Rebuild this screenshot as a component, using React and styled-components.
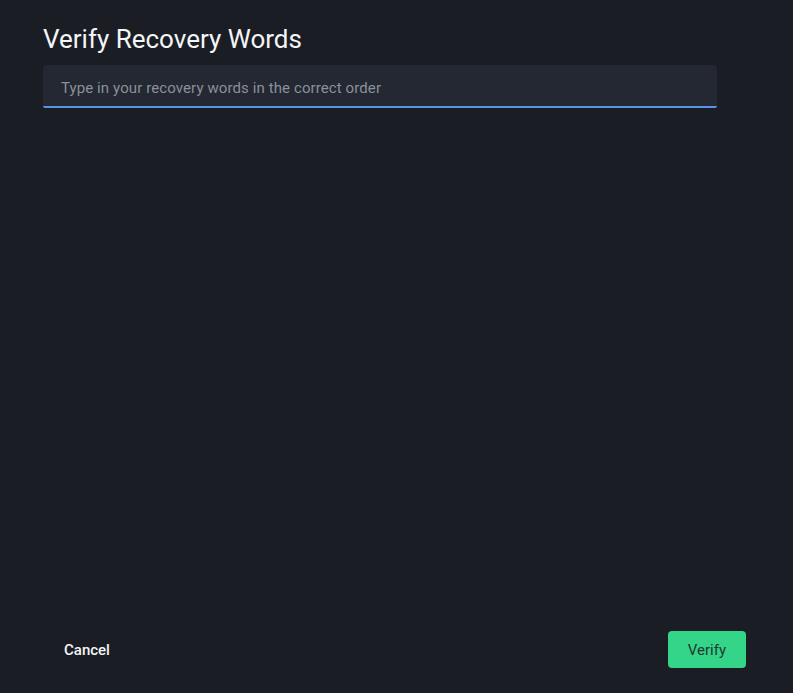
import React from 'react';
import styled, { createGlobalStyle } from 'styled-components';

const GlobalStyle = createGlobalStyle`
  html, body {
    margin: 0;
    padding: 0;
    background: #1a1d24;
  }
  body {
    font-family: Roboto, "Noto Sans", sans-serif;
  }
`;

const Page = styled.div`
  display: flex;
  flex-direction: column;
  height: 693px;
  box-sizing: border-box;
  padding: 23px 47px 25px 43px;
`;

const Title = styled.h1`
  margin: 0;
  font-size: 26px;
  line-height: 32px;
  font-weight: 400;
  color: #f4f5f7;
`;

const Field = styled.div`
  margin-top: 10px;
  width: 674px;
  height: 43px;
  box-sizing: border-box;
  background: #232833;
  border-radius: 4px 4px 2px 2px;
  border-bottom: 2px solid #5b93e6;
  display: flex;
  align-items: center;
  padding: 0 18px;
`;

const Input = styled.input`
  flex: 1;
  background: transparent;
  border: 0;
  outline: none;
  color: #e4e6ea;
  font-family: inherit;
  font-size: 15px;
  letter-spacing: 0.1px;
  padding: 0;
  margin-top: 4px;
  caret-color: #e4e6ea;
  &::placeholder {
    color: #8b9099;
  }
`;

const Spacer = styled.div`
  flex: 1;
`;

const Footer = styled.div`
  display: flex;
  justify-content: space-between;
  align-items: center;
`;

const Button = styled.button`
  font-family: inherit;
  font-size: 15px;
  height: 37px;
  border-radius: 4px;
  border: 0;
  cursor: pointer;
  padding: 0 ${(p) => (p.primary ? '20px' : '21px')};
  background: ${(p) => (p.primary ? '#34d489' : 'transparent')};
  color: ${(p) => (p.primary ? '#1b3b2c' : '#f4f5f7')};
  font-weight: ${(p) => (p.primary ? 400 : 500)};
`;

export default function App() {
  return (
    <>
      <GlobalStyle />
      <Page>
        <Title>Verify Recovery Words</Title>
        <Field>
          <Input autoFocus placeholder="Type in your recovery words in the correct order" />
        </Field>
        <Spacer />
        <Footer>
          <Button>Cancel</Button>
          <Button primary>Verify</Button>
        </Footer>
      </Page>
    </>
  );
}
